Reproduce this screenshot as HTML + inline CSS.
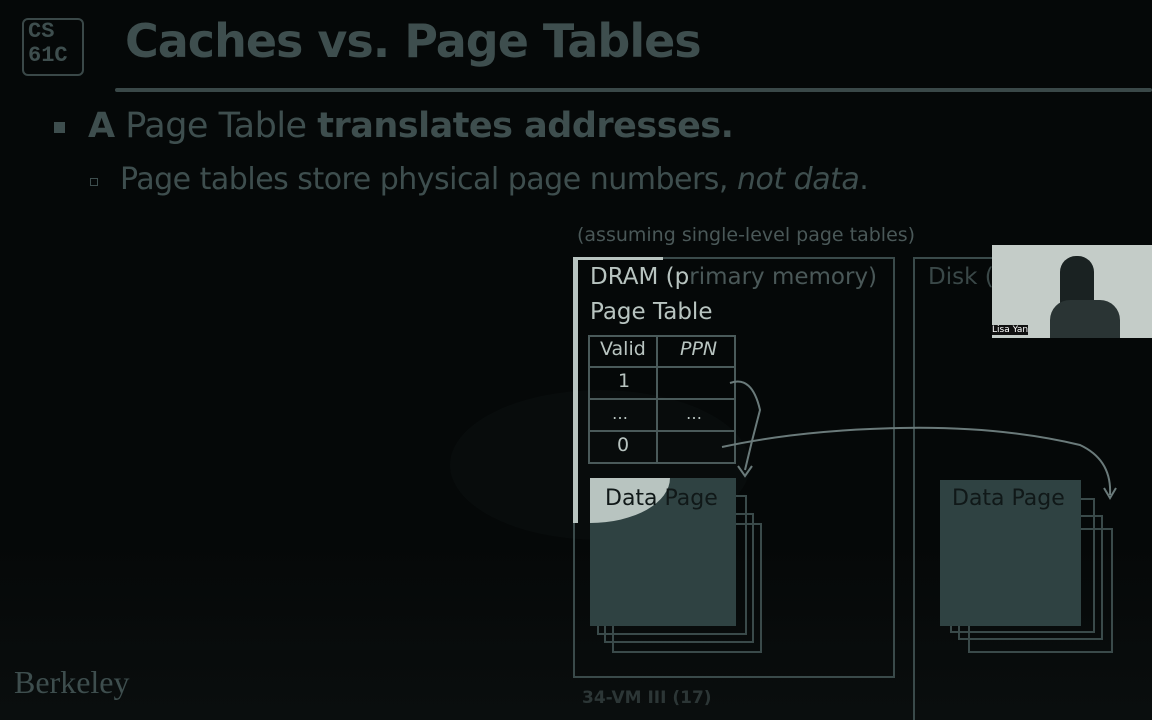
<!DOCTYPE html>
<html><head><style>
html,body{margin:0;width:1152px;height:720px;overflow:hidden;}
body{background:#050808;position:relative;font-family:"DejaVu Sans","Liberation Sans",sans-serif;}
.a{position:absolute;white-space:nowrap;}
.dim{color:#3e4e4e;}
.lt{color:#b8c4c0;}
.box{position:absolute;border:2px solid #3a4a4a;box-sizing:border-box;}
</style></head><body>
<div class="box" style="left:22px;top:18px;width:62px;height:58px;border-color:#3a4848;border-radius:6px;"></div>
<div class="a dim" style="left:28px;top:20px;font:bold 22px/24px 'Liberation Mono',monospace;">CS<br>61C</div>
<div class="a dim" style="left:125px;top:14px;font-size:46px;font-weight:bold;letter-spacing:-1px;">Caches vs. Page Tables</div>
<div class="a" style="left:115px;top:88px;width:1037px;height:4px;background:#3a4848;border-radius:2px;"></div>
<div class="a" style="left:54px;top:122px;width:11px;height:11px;background:#3e4e4e;"></div>
<div class="a dim" style="left:88px;top:106px;font-size:35px;letter-spacing:-0.5px;"><b>A</b> Page Table <b>translates addresses.</b></div>
<div class="a" style="left:90px;top:178px;width:6px;height:6px;border:1px solid #3e4e4e;"></div>
<div class="a dim" style="left:120px;top:162px;font-size:30px;letter-spacing:-0.5px;">Page tables store physical page numbers, <i>not data</i>.</div>
<div class="a dim" style="left:577px;top:224px;font-size:19px;color:#4a5858;">(assuming single-level page tables)</div>
<div class="a" style="left:450px;top:390px;width:300px;height:150px;border-radius:50%;background:#080c0c;"></div>
<div class="a" style="left:0;top:540px;width:1152px;height:180px;background:linear-gradient(#050808,#0a0e0e);"></div>
<div class="box" style="left:573px;top:257px;width:322px;height:421px;"></div>
<div class="a" style="left:573px;top:257px;width:5px;height:266px;background:#b8c4c0;"></div>
<div class="a" style="left:578px;top:257px;width:85px;height:3px;background:#b8c4c0;"></div>
<div class="a lt" style="left:590px;top:264px;font-size:23px;">DRAM (p<span style="color:#4a5858">rimary memory)</span></div>
<div class="a lt" style="left:590px;top:299px;font-size:23px;">Page Table</div>
<div class="box" style="left:913px;top:257px;width:260px;height:470px;"></div>
<div class="a" style="left:928px;top:264px;font-size:23px;color:#3a4848;">Disk (s</div>
<div class="a" style="left:588px;top:335px;width:148px;height:129px;border:2px solid #4a5a5a;box-sizing:border-box;"></div>
<div class="a" style="left:656px;top:335px;width:2px;height:129px;background:#4a5a5a;"></div>
<div class="a" style="left:588px;top:366px;width:148px;height:2px;background:#4a5a5a;"></div>
<div class="a" style="left:588px;top:398px;width:148px;height:2px;background:#4a5a5a;"></div>
<div class="a" style="left:588px;top:430px;width:148px;height:2px;background:#4a5a5a;"></div>
<div class="a lt" style="left:600px;top:338px;font-size:19px;">Valid</div>
<div class="a lt" style="left:680px;top:338px;font-size:19px;font-style:italic;">PPN</div>
<div class="a lt" style="left:618px;top:370px;font-size:19px;">1</div>
<div class="a lt" style="left:612px;top:404px;font-size:16px;">…</div>
<div class="a lt" style="left:686px;top:404px;font-size:16px;">…</div>
<div class="a lt" style="left:617px;top:434px;font-size:19px;">0</div>
<div class="box" style="left:612px;top:523px;width:150px;height:130px;"></div>
<div class="box" style="left:604px;top:513px;width:150px;height:130px;"></div>
<div class="box" style="left:597px;top:495px;width:150px;height:140px;"></div>
<div class="a" style="left:590px;top:478px;width:146px;height:148px;background:#2f4242;"></div>
<div class="a" style="left:590px;top:478px;width:80px;height:45px;background:#b8c4c0;border-bottom-right-radius:80px 45px;"></div>
<div class="a" style="left:605px;top:486px;font-size:22px;color:#101818;">Data Page</div>
<div class="box" style="left:968px;top:528px;width:145px;height:125px;"></div>
<div class="box" style="left:958px;top:515px;width:145px;height:125px;"></div>
<div class="box" style="left:950px;top:498px;width:145px;height:135px;"></div>
<div class="a" style="left:940px;top:480px;width:141px;height:146px;background:#2f4242;"></div>
<div class="a" style="left:952px;top:486px;font-size:22px;color:#101818;">Data Page</div>
<svg class="a" style="left:0;top:0" width="1152" height="720">
<path d="M730 383 Q752 375 760 410 Q752 440 745 470" stroke="#6a7a7a" stroke-width="2" fill="none"/>
<path d="M738 466 L745 476 L752 466" stroke="#6a7a7a" stroke-width="2" fill="none"/>
<path d="M722 447 Q800 430 900 428 Q1000 426 1080 445 Q1112 460 1110 495" stroke="#6a7a7a" stroke-width="2" fill="none"/>
<path d="M1104 488 L1110 498 L1116 488" stroke="#6a7a7a" stroke-width="2" fill="none"/>
</svg>
<div class="a" style="left:992px;top:245px;width:160px;height:93px;background:#c4ccc8;overflow:hidden;">
<div class="a" style="left:68px;top:11px;width:34px;height:82px;background:#1a2222;border-radius:16px 16px 4px 4px;"></div>
<div class="a" style="left:58px;top:55px;width:70px;height:38px;background:#2a3434;border-radius:20px 20px 0 0;"></div>
<div class="a" style="left:0;top:80px;font-size:9px;color:#fff;background:#111;">Lisa Yan</div>
</div>
<div class="a dim" style="left:14px;top:664px;font:32px 'Liberation Serif',serif;color:#3e4e4e;">Berkeley</div>
<div class="a" style="left:582px;top:688px;font-size:17px;font-weight:bold;color:#2c3636;">34-VM III (17)</div>
</body></html>
